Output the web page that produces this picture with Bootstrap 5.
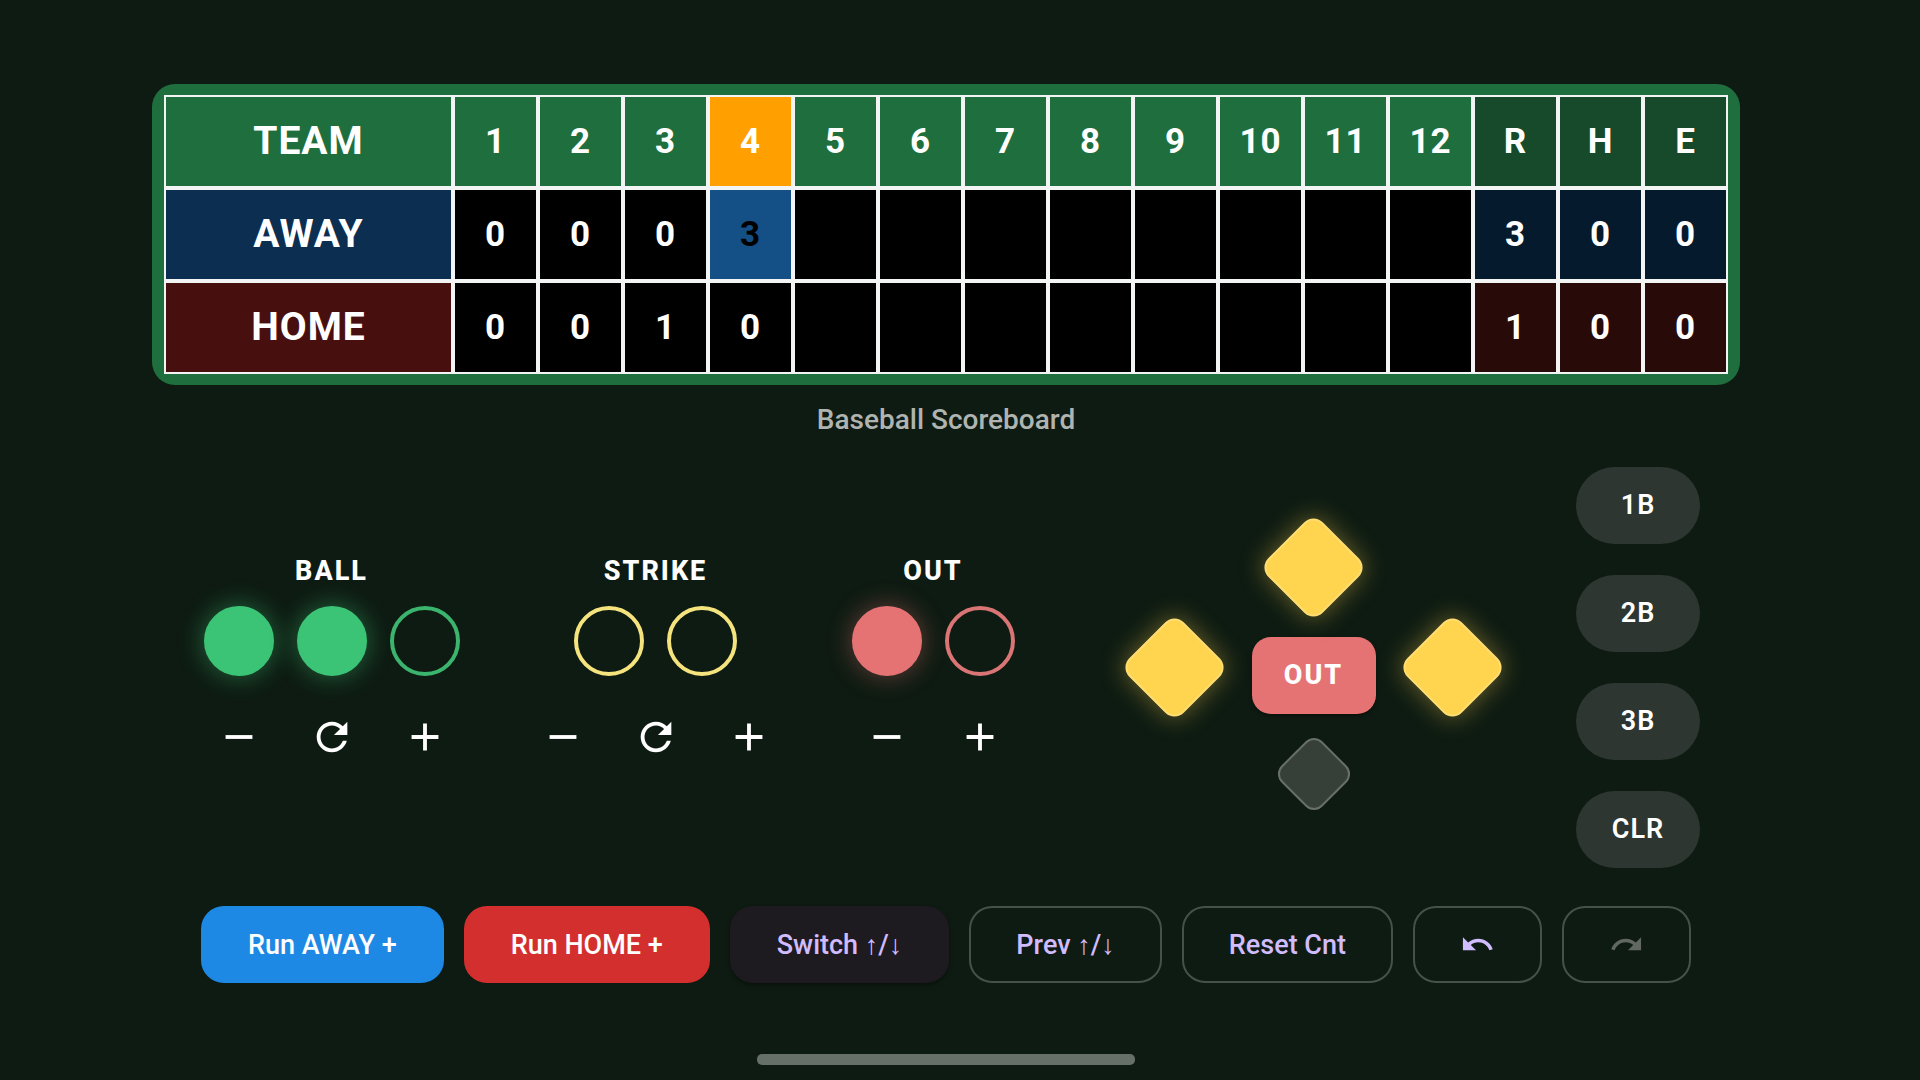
<!DOCTYPE html>
<html lang="en" data-bs-theme="dark">
<head>
<meta charset="utf-8">
<meta name="viewport" content="width=device-width, initial-scale=1">
<title>Baseball Scoreboard</title>
<link href="https://cdn.jsdelivr.net/npm/bootstrap@5.3.0/dist/css/bootstrap.min.css" rel="stylesheet">
<style>
  body { background: #0e1b12; color: #fff; font-family: Roboto, "Noto Sans", sans-serif; }
  .stage { padding: 84px 180px 15px 152px; }
  .board { background: #1f6f3e; border-radius: 23px; padding: 11px 12px; }
  .score-grid { table-layout: fixed; border-collapse: separate; border-spacing: 0; font-size: 35px; line-height: 40px; letter-spacing: 1px; }
  .score-grid th, .score-grid td { height: 93px; width: 85px; padding: 0; border: 2px solid #f2f5f3; text-align: center; vertical-align: middle; font-weight: 700; }
  .score-grid td { background: #000; }
  .score-grid .team-col { width: auto; padding-bottom: 2px; font-size: 39px; }
  .score-grid .inning-now { background: #ffa000; }
  .score-grid .batting-now { background: #144f85; color: #000; }
  .score-grid thead .total { background: #164a2b; }
  .away-row .team-col { background: #0c2e50; }
  .away-row .total { background: #061a2d !important; }
  .home-row .team-col { background: #480f0f; }
  .home-row .total { background: #280a08 !important; }
  .board-name { margin: 19px 0 31px; font-size: 28px; line-height: 32px; font-weight: 500; color: #afb4b0; }
  .controls { padding: 0 40px; }
  .counts { gap: 45px; }
  .counter { gap: 15px; }
  .counter-name { margin: 0; font-size: 27px; line-height: 39px; font-weight: 800; letter-spacing: 2px; }
  .lamp-slot, .btn-step { width: 93px; }
  .lamp { width: 70px; height: 70px; border: 4px solid var(--lamp); border-radius: 50%; }
  .lamp.lit { background: var(--lamp); box-shadow: 0 0 23px 2px var(--glow); }
  .lamps-ball { --lamp: #3bb56e; --glow: rgba(59, 196, 117, .4); }
  .lamps-ball .lit { --lamp: #3bc475; }
  .lamps-strike { --lamp: #f5e47e; }
  .lamps-out { --lamp: #d97575; --glow: rgba(229, 115, 115, .35); }
  .lamps-out .lit { --lamp: #e57373; }
  .btn-step { height: 93px; padding: 0; border: 0; color: #fff; }
  .btn-step svg { width: 46px; height: 46px; }
  .field { margin-left: auto; }
  .field-col { width: 139px; gap: 31px; }
  .base { width: 77px; height: 77px; padding: 0; border: 2px solid #ffdd72; border-radius: 13px; background: #ffd54f; box-shadow: 0 0 23px 2px rgba(255, 213, 79, .35); transform: rotate(45deg); }
  .base-plate { width: 58px; height: 58px; border-radius: 12px; border: 2px solid #687069; background: #374038; box-shadow: none; }
  .btn-out { width: 124px; height: 77px; padding: 0; border: 0; border-radius: 19px; background: #e57373; color: #fff; font-size: 27px; font-weight: 800; letter-spacing: 2px; box-shadow: 0 2px 4px rgba(0, 0, 0, .4); }
  .base-keys { margin-left: 54px; gap: 31px; }
  .btn-base { width: 124px; height: 77px; padding: 0; border: 0; border-radius: 39px; background: #2d3630; color: #fff; font-size: 27px; font-weight: 600; letter-spacing: 1px; }
  .actions { margin-top: 38px; gap: 20px; }
  .btn-act { height: 77px; padding: 0 45px; border: 2px solid #465149; border-radius: 23px; color: #d0bcff; font-size: 27px; line-height: 32px; font-weight: 500; white-space: nowrap; }
  .btn-act svg { width: 35px; height: 35px; }
  .act-away { background: #1e88e5; border-color: #1e88e5; color: #fff; }
  .act-home { background: #d32f2f; border-color: #d32f2f; color: #fff; }
  .act-switch { background: #1d1b20; border-color: #1d1b20; box-shadow: 0 2px 4px rgba(0, 0, 0, .4); }
  .btn-act:disabled { opacity: 1; color: #616863; border-color: #465149; }
  .home-bar { width: 378px; height: 11px; border-radius: 5px; background: #666f68; }
  svg { display: block; fill: currentColor; }
</style>
<script src="https://cdn.jsdelivr.net/npm/bootstrap@5.3.0/dist/js/bootstrap.bundle.min.js"></script>
</head>
<body>
<svg class="d-none" aria-hidden="true">
  <symbol id="i-minus" viewBox="0 0 24 24"><path d="M19 13H5v-2h14v2z"/></symbol>
  <symbol id="i-plus" viewBox="0 0 24 24"><path d="M19 13h-6v6h-2v-6H5v-2h6V5h2v6h6v2z"/></symbol>
  <symbol id="i-refresh" viewBox="0 0 24 24"><path d="M17.65 6.35C16.2 4.9 14.21 4 12 4c-4.42 0-7.99 3.58-7.99 8s3.57 8 7.99 8c3.73 0 6.84-2.55 7.73-6h-2.08c-.82 2.33-3.04 4-5.65 4-3.31 0-6-2.69-6-6s2.69-6 6-6c1.66 0 3.14.69 4.22 1.78L13 11h7V4l-2.35 2.35z"/></symbol>
  <symbol id="i-undo" viewBox="0 0 24 24"><path d="M12.5 8c-2.65 0-5.05.99-6.9 2.6L2 7v9h9l-3.62-3.62c1.39-1.16 3.16-1.88 5.12-1.88 3.54 0 6.55 2.31 7.6 5.5l2.37-.78C21.08 11.03 17.15 8 12.5 8z"/></symbol>
  <symbol id="i-redo" viewBox="0 0 24 24"><path d="M18.4 10.6C16.55 8.99 14.15 8 11.5 8c-4.65 0-8.58 3.03-9.96 7.22L3.9 16c1.05-3.19 4.05-5.5 7.6-5.5 1.95 0 3.73.72 5.12 1.88L13 16h9V7l-3.6 3.6z"/></symbol>
</svg>
<main class="stage d-flex flex-column min-vh-100">
  <div class="board">
    <table class="score-grid w-100">
      <thead>
        <tr><th class="team-col" scope="col">TEAM</th><th scope="col">1</th><th scope="col">2</th><th scope="col">3</th><th scope="col" class="inning-now">4</th><th scope="col">5</th><th scope="col">6</th><th scope="col">7</th><th scope="col">8</th><th scope="col">9</th><th scope="col">10</th><th scope="col">11</th><th scope="col">12</th><th scope="col" class="total">R</th><th scope="col" class="total">H</th><th scope="col" class="total">E</th></tr>
      </thead>
      <tbody>
        <tr class="away-row"><th class="team-col" scope="row">AWAY</th><td>0</td><td>0</td><td>0</td><td class="batting-now">3</td><td></td><td></td><td></td><td></td><td></td><td></td><td></td><td></td><td class="total">3</td><td class="total">0</td><td class="total">0</td></tr>
        <tr class="home-row"><th class="team-col" scope="row">HOME</th><td>0</td><td>0</td><td>1</td><td>0</td><td></td><td></td><td></td><td></td><td></td><td></td><td></td><td></td><td class="total">1</td><td class="total">0</td><td class="total">0</td></tr>
      </tbody>
    </table>
  </div>
  <h1 class="board-name text-center">Baseball Scoreboard</h1>

  <section class="controls d-flex align-items-center">
    <div class="counts d-flex">
      <div class="counter lamps-ball d-flex flex-column align-items-center">
        <h2 class="counter-name">BALL</h2>
        <div class="d-flex">
          <div class="lamp-slot d-flex justify-content-center"><span class="lamp lit"></span></div>
          <div class="lamp-slot d-flex justify-content-center"><span class="lamp lit"></span></div>
          <div class="lamp-slot d-flex justify-content-center"><span class="lamp"></span></div>
        </div>
        <div class="d-flex">
          <button type="button" class="btn btn-step d-flex align-items-center justify-content-center" aria-label="Ball minus"><svg><use href="#i-minus"/></svg></button>
          <button type="button" class="btn btn-step d-flex align-items-center justify-content-center" aria-label="Reset balls"><svg><use href="#i-refresh"/></svg></button>
          <button type="button" class="btn btn-step d-flex align-items-center justify-content-center" aria-label="Ball plus"><svg><use href="#i-plus"/></svg></button>
        </div>
      </div>
      <div class="counter lamps-strike d-flex flex-column align-items-center">
        <h2 class="counter-name">STRIKE</h2>
        <div class="d-flex">
          <div class="lamp-slot d-flex justify-content-center"><span class="lamp"></span></div>
          <div class="lamp-slot d-flex justify-content-center"><span class="lamp"></span></div>
        </div>
        <div class="d-flex">
          <button type="button" class="btn btn-step d-flex align-items-center justify-content-center" aria-label="Strike minus"><svg><use href="#i-minus"/></svg></button>
          <button type="button" class="btn btn-step d-flex align-items-center justify-content-center" aria-label="Reset strikes"><svg><use href="#i-refresh"/></svg></button>
          <button type="button" class="btn btn-step d-flex align-items-center justify-content-center" aria-label="Strike plus"><svg><use href="#i-plus"/></svg></button>
        </div>
      </div>
      <div class="counter lamps-out d-flex flex-column align-items-center">
        <h2 class="counter-name">OUT</h2>
        <div class="d-flex">
          <div class="lamp-slot d-flex justify-content-center"><span class="lamp lit"></span></div>
          <div class="lamp-slot d-flex justify-content-center"><span class="lamp"></span></div>
        </div>
        <div class="d-flex">
          <button type="button" class="btn btn-step d-flex align-items-center justify-content-center" aria-label="Out minus"><svg><use href="#i-minus"/></svg></button>
          <button type="button" class="btn btn-step d-flex align-items-center justify-content-center" aria-label="Out plus"><svg><use href="#i-plus"/></svg></button>
        </div>
      </div>
    </div>

    <div class="field d-flex align-items-center">
      <div class="field-col d-flex justify-content-center"><button type="button" class="btn base" aria-label="Third base"></button></div>
      <div class="field-col d-flex flex-column align-items-center pb-1">
        <button type="button" class="btn base" aria-label="Second base"></button>
        <button type="button" class="btn btn-out">OUT</button>
        <button type="button" class="btn base base-plate" aria-label="Home plate"></button>
      </div>
      <div class="field-col d-flex justify-content-center"><button type="button" class="btn base" aria-label="First base"></button></div>
    </div>

    <div class="base-keys d-flex flex-column">
      <button type="button" class="btn btn-base">1B</button>
      <button type="button" class="btn btn-base">2B</button>
      <button type="button" class="btn btn-base">3B</button>
      <button type="button" class="btn btn-base">CLR</button>
    </div>
  </section>

  <section class="actions d-flex justify-content-center">
    <button type="button" class="btn btn-act act-away">Run AWAY +</button>
    <button type="button" class="btn btn-act act-home">Run HOME +</button>
    <button type="button" class="btn btn-act act-switch">Switch ↑/↓</button>
    <button type="button" class="btn btn-act">Prev ↑/↓</button>
    <button type="button" class="btn btn-act">Reset Cnt</button>
    <button type="button" class="btn btn-act" aria-label="Undo"><svg><use href="#i-undo"/></svg></button>
    <button type="button" class="btn btn-act" aria-label="Redo" disabled><svg><use href="#i-redo"/></svg></button>
  </section>

  <div class="home-bar mt-auto mx-auto"></div>
</main>
</body>
</html>
